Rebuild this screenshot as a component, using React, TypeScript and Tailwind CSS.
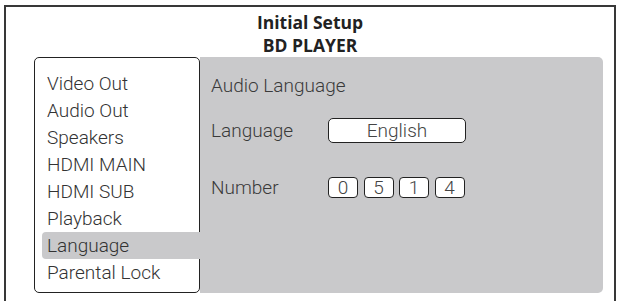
import React from 'react'

const MENU = ['Video Out', 'Audio Out', 'Speakers', 'HDMI MAIN', 'HDMI SUB', 'Playback', 'Language', 'Parental Lock']
const ACTIVE = 'Language'
const DIGITS = ['0', '5', '1', '4']

export default function App() {
  return (
    <div className="h-[301px] w-[618px] overflow-hidden bg-white pl-[4px] pt-[5px]">
      <div className="h-[320px] w-[612px] border-2 border-[#383838] font-['Roboto',Arial,sans-serif] font-light text-[#333]">
        {/* title */}
        <div className="pt-[4px] text-center font-['Open_Sans',sans-serif] text-[17.5px] font-bold leading-[23px] text-[#222]">
          <div>Initial Setup</div>
          <div>BD PLAYER</div>
        </div>

        <div className="ml-[28px] flex h-[236px] w-[569px]">
          {/* side menu */}
          <div className="relative z-10 w-[166px] shrink-0 rounded-[5px] border-[1.5px] border-[#222] bg-white pt-[12px]">
            {MENU.map((m) => (
              <div
                key={m}
                className={`ml-[7px] h-[27px] pl-[5px] text-[19px] leading-[27px] ${
                  m === ACTIVE ? '-mr-[2px] rounded-l-[4px] bg-[#c9c9cb]' : ''
                }`}
              >
                {m}
              </div>
            ))}
          </div>

          {/* settings panel */}
          <div className="flex-1 rounded-r-[5px] bg-[#c9c9cb] pl-[11px] pt-[15px] text-[19px] text-[#3a3a3a]">
            <div className="h-[27px] leading-[27px]">Audio Language</div>

            <div className="mt-[18px] flex items-center">
              <div className="w-[117px] leading-[27px]">Language</div>
              <div className="flex h-[25px] w-[138px] items-center justify-center rounded-[5px] border-[1.5px] border-[#222] bg-white leading-none text-[#444]">
                English
              </div>
            </div>

            <div className="mt-[30px] flex items-center">
              <div className="w-[117px] leading-[27px]">Number</div>
              <div className="flex gap-[5.5px]">
                {DIGITS.map((d, i) => (
                  <div
                    key={i}
                    className="flex h-[21px] w-[30px] items-center justify-center rounded-[4px] border-[1.5px] border-[#222] bg-white leading-none text-[#444]"
                  >
                    {d}
                  </div>
                ))}
              </div>
            </div>
          </div>
        </div>
      </div>
    </div>
  )
}
